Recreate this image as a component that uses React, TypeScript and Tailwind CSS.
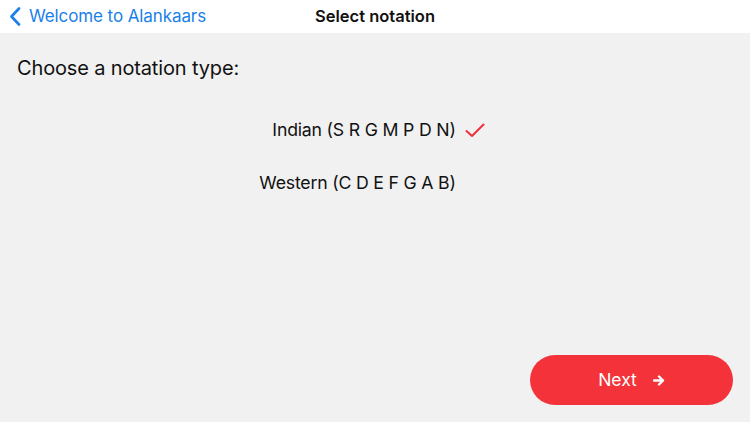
import React from "react";

const font = { fontFamily: "Inter, 'Liberation Sans', sans-serif" };

const App: React.FC = () => {
  return (
    <div className="w-[750px] h-[422px] bg-[#f1f1f1] flex flex-col text-[#111]" style={font}>
      <header className="h-[33px] bg-white flex items-center relative">
        <div className="flex items-center pl-[9px]">
          <svg width="12" height="19" viewBox="0 0 12 19" className="mr-[8px]">
            <path d="M10 1.5 L2.5 9.5 L10 17.5" fill="none" stroke="#1a7fe8" strokeWidth="2.6" strokeLinecap="round" strokeLinejoin="round" />
          </svg>
          <span className="text-[17px] text-[#1a7fe8] tracking-[-0.1px]">Welcome to Alankaars</span>
        </div>
        <span className="absolute left-0 right-0 text-center text-[16.5px] font-semibold pointer-events-none">Select notation</span>
      </header>

      <div className="pl-[17px] pt-[20px] text-[20px] tracking-[-0.15px]">Choose a notation type:</div>

      <div className="flex justify-center pt-[34px] pr-[6px]">
        <div className="grid grid-cols-[auto_20px] gap-x-[9px] gap-y-[26px] items-center text-[17.7px] tracking-[-0.2px]">
          <span className="text-right">Indian (S R G M P D N)</span>
          <svg width="20" height="15" viewBox="0 0 20 15">
            <path d="M1.5 8 L7 13 L18.5 1.5" fill="none" stroke="#f0313a" strokeWidth="2" strokeLinecap="round" strokeLinejoin="round" />
          </svg>
          <span className="text-right">Western (C D E F G A B)</span>
          <span />
        </div>
      </div>

      <div className="flex-1" />
      <div className="flex justify-end pr-[17px] pb-[17px]">
        <button className="w-[203px] h-[50px] rounded-full bg-[#f3323a] text-white flex items-center justify-center gap-[16px] text-[17.5px]">
          <span>Next</span>
          <svg width="12" height="11" viewBox="0 0 12 11">
            <path d="M1 5.5 H10 M6 1.5 L10 5.5 L6 9.5" fill="none" stroke="white" strokeWidth="2.4" strokeLinecap="round" strokeLinejoin="round" />
          </svg>
        </button>
      </div>
    </div>
  );
};

export default App;
